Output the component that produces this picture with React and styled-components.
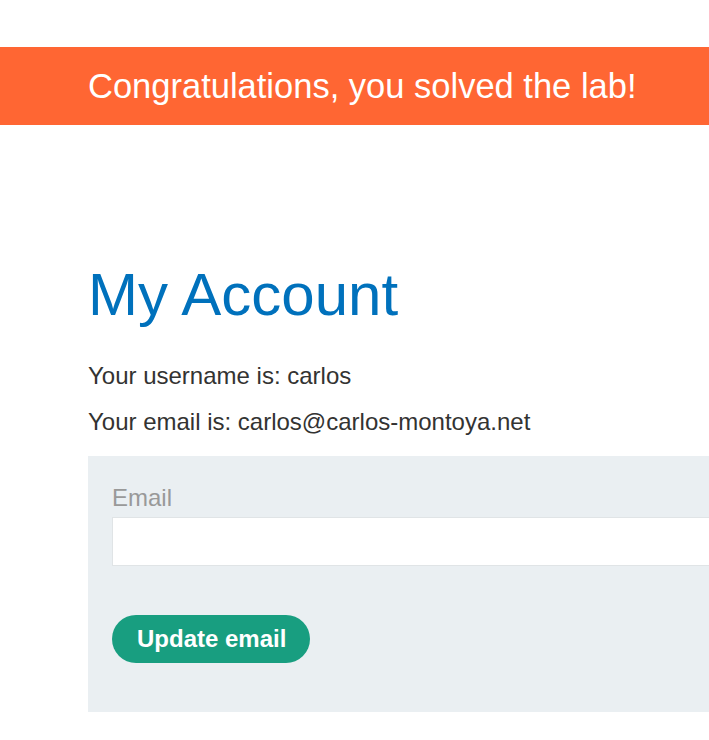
import React from "react";
import styled, { createGlobalStyle } from "styled-components";

const Global = createGlobalStyle`
  html, body { margin: 0; padding: 0; background: #fff; overflow-x: hidden; }
  body { font-family: "Liberation Sans", Arial, sans-serif; color: #333332; }
`;

const Page = styled.div`
  width: 100%;
  padding-top: 47px;
`;

const Banner = styled.div`
  background: #ff6633;
  height: 78px;
  display: flex;
  align-items: center;
  padding-left: 88px;
`;

const BannerText = styled.h4`
  margin: 0;
  color: #fff;
  font-weight: 400;
  font-size: 34.5px;
  line-height: 40px;
  white-space: nowrap;
`;

const Container = styled.div`
  padding: 135px 0 0 88px;
  width: 900px;
`;

const Title = styled.h1`
  margin: 0 0 33px;
  color: #0071bc;
  font-weight: 400;
  font-size: 60px;
  line-height: 69px;
`;

const Info = styled.p`
  margin: 0 0 18px;
  font-size: 24px;
  line-height: 28px;
  white-space: nowrap;
`;

const Form = styled.form`
  margin-top: 20px;
  background: #eaeff2;
  padding: 28px 24px 49px;
  display: flex;
  flex-direction: column;
  align-items: flex-start;
`;

const Label = styled.label`
  color: #999;
  font-size: 24px;
  line-height: 28px;
  margin-bottom: 5px;
`;

const Input = styled.input`
  box-sizing: border-box;
  width: 100%;
  height: 49px;
  border: 1px solid #e0e4e6;
  background: #fff;
  margin: 0 0 49px;
  font-size: 24px;
  font-family: inherit;
  outline: none;
`;

const Button = styled.button`
  box-sizing: border-box;
  height: 48px;
  padding: 0 24px 0 25px;
  border: none;
  border-radius: 24px;
  background: #189e80;
  color: #fff;
  font-family: "Liberation Sans", Arial, sans-serif;
  font-weight: 700;
  font-size: 24px;
  line-height: 28px;
  cursor: pointer;
`;

export default function App() {
  return (
    <Page>
      <Global />
      <Banner>
        <BannerText>Congratulations, you solved the lab!</BannerText>
      </Banner>
      <Container>
        <Title>My Account</Title>
        <Info>Your username is: carlos</Info>
        <Info>Your email is: carlos@carlos-montoya.net</Info>
        <Form onSubmit={(e) => e.preventDefault()}>
          <Label htmlFor="email">Email</Label>
          <Input id="email" type="email" name="email" />
          <Button type="submit">Update email</Button>
        </Form>
      </Container>
    </Page>
  );
}
